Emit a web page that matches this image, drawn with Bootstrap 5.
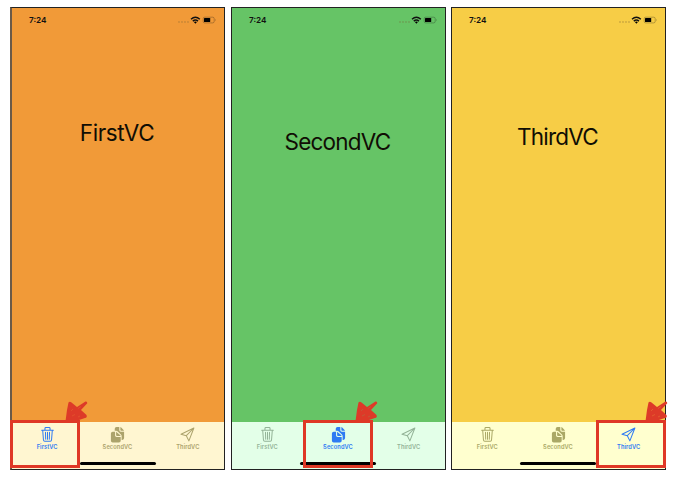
<!DOCTYPE html>
<html lang="en">
<head>
<meta charset="utf-8">
<meta name="viewport" content="width=device-width, initial-scale=1">
<title>Tab bar screens</title>
<link href="https://cdn.jsdelivr.net/npm/bootstrap@5.3.0/dist/css/bootstrap.min.css" rel="stylesheet">
<style>
body{font-family:Inter,"Liberation Sans",sans-serif;color:#111;overflow:hidden}
.screens{padding:7px 0 0 10px}
.phone{width:215px;height:463px;border:1px solid #222;background:var(--bg)}
.phone:first-child{border-left:2px solid #6b5a48}
.status{height:26px;padding:0 8px 2px 17px}
.clock{font-size:8.2px;font-weight:600;line-height:10px}
.title{font-size:22.5px;line-height:26px;letter-spacing:var(--ls);margin-top:var(--top);padding-right:2px;color:#100d04}
.tabs{height:47px;background:var(--bar);color:var(--off);padding:4px 1px 0 0}
.tab-item{flex:1 1 0;min-width:0;font-size:5.7px;font-weight:600;line-height:7px;letter-spacing:.1px}
.tab-item svg{width:17px;height:17px;margin-bottom:-.5px}
.tab-item.current{color:#2f7bf3}
.homebar{left:68px;bottom:4px;width:76px;height:3px;border-radius:2px;background:#000}
.frame{left:var(--x);bottom:1px;width:70px;height:48px;border:3px solid #df3826;z-index:2}
.pointer{left:var(--ax);top:392px;width:24px;height:23px;z-index:3}
.one{--bg:#f19a38;--bar:#fff6d1;--off:#aca36c;--top:86px;--ls:-.45px;--x:-2px;--ax:53px}
.two{--bg:#66c466;--bar:#e3ffe8;--off:#93b397;--top:95px;--ls:-.8px;--x:71px;--ax:123px;margin-left:6px}
.three{--bg:#f7cd46;--bar:#ffffcf;--off:#aaa866;--top:90px;--ls:-.8px;--x:144px;--ax:193px;margin-left:5px}
</style>
</head>
<body class="bg-white">
<svg class="d-none" aria-hidden="true">
  <symbol id="bin" viewBox="0 0 16 16"><g fill="none" stroke="currentColor" stroke-width=".95" stroke-linecap="round" stroke-linejoin="round"><path d="M2.5 4h11M5.6 3.8V2.3q0-.8.8-.8h3.2q.8 0 .8.8v1.5M3.5 4.2l.7 9q.1 1.2 1.2 1.2h5.2q1.1 0 1.2-1.2l.7-9M6.1 6l.2 6.5M8 6v6.5M9.9 6l-.2 6.5"/></g></symbol>
  <symbol id="docs" viewBox="0 0 16 16"><path fill="currentColor" d="M5.4 4.4V2.6Q5.4.9 7.1.9h2.6v3.2q0 1.3 1.3 1.3h3.2v6q0 1.7-1.7 1.7h-.6V9.5q0-.9-.7-1.6L8.3 5.1q-.7-.7-1.6-.7zM10.7 1q.4.1.8.5l2.2 2.2q.4.4.4.8h-2.7q-.7 0-.7-.7z"/><path fill="currentColor" d="M1.8 7q0-1.7 1.7-1.7h2.2v3.6q0 1.4 1.4 1.4H11v3.6q0 1.7-1.7 1.7H3.5q-1.7 0-1.7-1.7zM6.7 5.5q.4.1.8.5l2.9 2.5q.4.4.5.8H7.5q-.8 0-.8-.8z"/></symbol>
  <symbol id="plane" viewBox="0 0 16 16"><path fill="none" stroke="currentColor" stroke-width=".95" stroke-linejoin="round" d="M14 1.9 1.9 7.8l5 1.3 2.4 4.9zM6.9 9.1 14 1.9"/></symbol>
  <symbol id="signals" viewBox="0 0 38 10"><g fill="#7b6234" opacity=".65"><circle cx="1" cy="7" r=".65"/><circle cx="4" cy="7" r=".65"/><circle cx="7" cy="7" r=".65"/><circle cx="10" cy="7" r=".65"/></g><g fill="none" stroke="#111" stroke-width="1.5"><path d="M13 4.2q4.4-3.8 8.8 0M14.8 6.1q2.6-2.1 5.2 0"/></g><path d="m15.9 7.1 1.5 1.6 1.5-1.6q-1.5-1.1-3 0"/><rect x="25.2" y="2.2" width="11" height="5.7" rx="1.5" fill="none" stroke="#111" stroke-opacity=".4" stroke-width=".7"/><rect x="26" y="3" width="6.2" height="4.1" rx=".6"/><path d="M37 4.1q1 .9 0 1.8z" opacity=".5"/></symbol>
  <symbol id="scribble" viewBox="0 0 24 23"><path fill="#dd3a28" d="M3.5 2.5Q4.500 .8 6.500 2.500l5.500 4.500L20.500 1.500q1.800-.3 1.800 1.700L16 10l5.500 5q1 2.500-1.500 3L12.500 20.500H.6L2 10z"/><path fill="none" stroke="var(--bg)" stroke-width=".5" opacity=".45" d="m6 11 2-2M7 16l3-1.500M13 17l2-1M13 8.500l3-2"/></symbol>
</svg>
<main class="screens d-flex align-items-start">
  <section class="phone one position-relative d-flex flex-column flex-shrink-0">
    <div class="status d-flex justify-content-between align-items-center"><span class="clock">7:24</span><svg width="38" height="10"><use href="#signals"/></svg></div>
    <div class="title text-center">FirstVC</div>
    <nav class="tabs d-flex mt-auto">
      <div class="tab-item current d-flex flex-column align-items-center"><svg><use href="#bin"/></svg>FirstVC</div>
      <div class="tab-item d-flex flex-column align-items-center"><svg><use href="#docs"/></svg>SecondVC</div>
      <div class="tab-item d-flex flex-column align-items-center"><svg><use href="#plane"/></svg>ThirdVC</div>
    </nav>
    <div class="homebar position-absolute"></div><div class="frame position-absolute"></div>
    <svg class="pointer position-absolute"><use href="#scribble"/></svg>
  </section>
  <section class="phone two position-relative d-flex flex-column flex-shrink-0">
    <div class="status d-flex justify-content-between align-items-center"><span class="clock">7:24</span><svg width="38" height="10"><use href="#signals"/></svg></div>
    <div class="title text-center">SecondVC</div>
    <nav class="tabs d-flex mt-auto">
      <div class="tab-item d-flex flex-column align-items-center"><svg><use href="#bin"/></svg>FirstVC</div>
      <div class="tab-item current d-flex flex-column align-items-center"><svg><use href="#docs"/></svg>SecondVC</div>
      <div class="tab-item d-flex flex-column align-items-center"><svg><use href="#plane"/></svg>ThirdVC</div>
    </nav>
    <div class="homebar position-absolute"></div><div class="frame position-absolute"></div>
    <svg class="pointer position-absolute"><use href="#scribble"/></svg>
  </section>
  <section class="phone three position-relative d-flex flex-column flex-shrink-0">
    <div class="status d-flex justify-content-between align-items-center"><span class="clock">7:24</span><svg width="38" height="10"><use href="#signals"/></svg></div>
    <div class="title text-center">ThirdVC</div>
    <nav class="tabs d-flex mt-auto">
      <div class="tab-item d-flex flex-column align-items-center"><svg><use href="#bin"/></svg>FirstVC</div>
      <div class="tab-item d-flex flex-column align-items-center"><svg><use href="#docs"/></svg>SecondVC</div>
      <div class="tab-item current d-flex flex-column align-items-center"><svg><use href="#plane"/></svg>ThirdVC</div>
    </nav>
    <div class="homebar position-absolute"></div><div class="frame position-absolute"></div>
    <svg class="pointer position-absolute"><use href="#scribble"/></svg>
  </section>
</main>
<script src="https://cdn.jsdelivr.net/npm/bootstrap@5.3.0/dist/js/bootstrap.bundle.min.js"></script>
</body>
</html>
